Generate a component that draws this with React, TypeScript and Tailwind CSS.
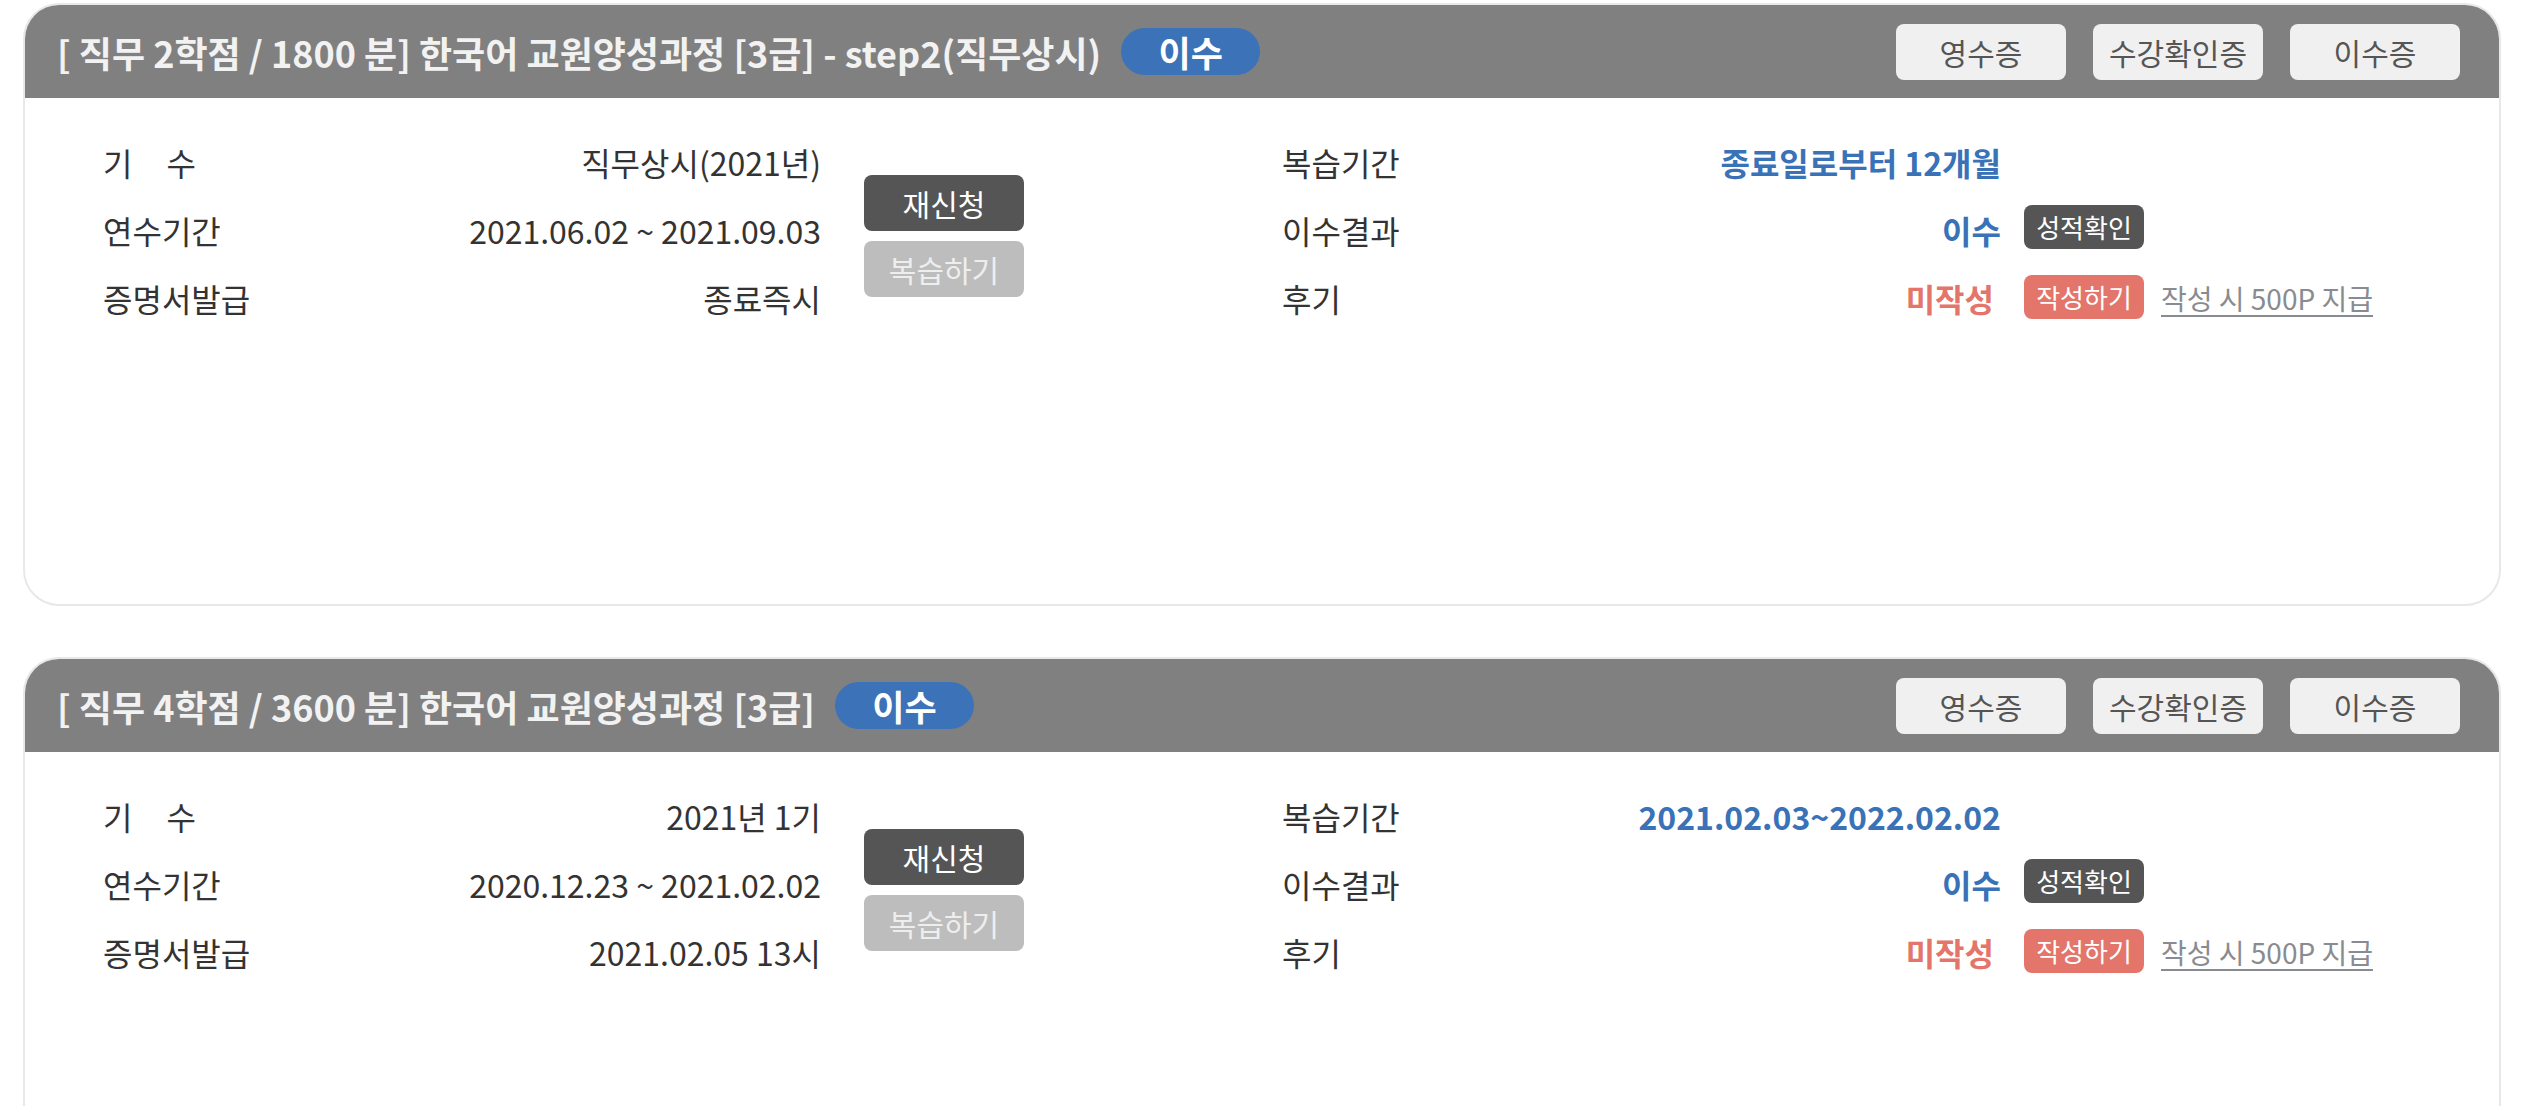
import React from "react";

type Course = {
  title: string;
  gisu: string;
  period: string;
  cert: string;
  review: string;
};

const courses: Course[] = [
  {
    title: "[ 직무 2학점 / 1800 분] 한국어 교원양성과정 [3급] - step2(직무상시)",
    gisu: "직무상시(2021년)",
    period: "2021.06.02 ~ 2021.09.03",
    cert: "종료즉시",
    review: "종료일로부터 12개월",
  },
  {
    title: "[ 직무 4학점 / 3600 분] 한국어 교원양성과정 [3급]",
    gisu: "2021년 1기",
    period: "2020.12.23 ~ 2021.02.02",
    cert: "2021.02.05 13시",
    review: "2021.02.03~2022.02.02",
  },
];

function Card({ c, first }: { c: Course; first: boolean }) {
  return (
    <div
      className={`w-[2478px] h-[603px] border-2 border-[#e8e8e8] rounded-[36px] overflow-hidden bg-white ${
        first ? "" : "mt-[51px]"
      }`}
    >
      <div className="h-[93px] bg-[#808080] flex items-center justify-between pl-[32px] pr-[39px]">
        <div className="flex items-center">
          <span className="text-[36px] font-bold text-[#f2f2f2] leading-none whitespace-nowrap">
            {c.title}
          </span>
          <span className="ml-[20px] h-[47px] w-[139px] rounded-full bg-[#3b72b8] text-white font-bold text-[35px] flex items-center justify-center leading-none">
            이수
          </span>
        </div>
        <div className="flex items-center gap-[27px]">
          {["영수증", "수강확인증", "이수증"].map((t) => (
            <div
              key={t}
              className="w-[170px] h-[56px] rounded-[8px] bg-[#f0f0f0] text-[#555555] text-[30px] flex items-center justify-center leading-none"
            >
              {t}
            </div>
          ))}
        </div>
      </div>
      <div className="flex pt-[30px] pl-[78px] text-[32px] text-[#333333]">
        <div className="w-[718px] flex flex-col">
          <div className="h-[68px] flex items-center justify-between">
            <span className="flex">
              <span>기</span>
              <span className="ml-[34px]">수</span>
            </span>
            <span>{c.gisu}</span>
          </div>
          <div className="h-[68px] flex items-center justify-between">
            <span>연수기간</span>
            <span>{c.period}</span>
          </div>
          <div className="h-[68px] flex items-center justify-between">
            <span>증명서발급</span>
            <span>{c.cert}</span>
          </div>
        </div>
        <div className="ml-[43px] mt-[47px] w-[160px] flex flex-col gap-[10px]">
          <div className="h-[56px] rounded-[8px] bg-[#555555] text-white text-[30px] flex items-center justify-center leading-none">
            재신청
          </div>
          <div className="h-[56px] rounded-[8px] bg-[#bdbdbd] text-[#eeeeee] text-[30px] flex items-center justify-center leading-none">
            복습하기
          </div>
        </div>
        <div className="ml-[258px] flex flex-col">
          <div className="h-[68px] flex items-center">
            <div className="w-[719px] flex items-center justify-between">
              <span>복습기간</span>
              <span className="font-bold text-[#3a72b8]">{c.review}</span>
            </div>
          </div>
          <div className="h-[68px] flex items-center">
            <div className="w-[719px] flex items-center justify-between">
              <span>이수결과</span>
              <span className="font-bold text-[#3a72b8]">이수</span>
            </div>
            <div className="ml-[23px] w-[120px] h-[44px] rounded-[8px] bg-[#555555] text-white text-[26px] flex items-center justify-center leading-none mt-[-6px]">
              성적확인
            </div>
          </div>
          <div className="h-[68px] flex items-center">
            <div className="w-[719px] flex items-center justify-between">
              <span>후기</span>
              <span className="font-bold text-[#e3756a] pr-[7px]">미작성</span>
            </div>
            <div className="ml-[23px] w-[120px] h-[44px] rounded-[8px] bg-[#e3756a] text-white text-[26px] flex items-center justify-center leading-none mt-[-2px]">
              작성하기
            </div>
            <span className="ml-[17px] text-[28px] text-[#888c92] underline underline-offset-[5px]">
              작성 시 500P 지급
            </span>
          </div>
        </div>
      </div>
    </div>
  );
}

export default function App() {
  return (
    <div className="min-h-screen bg-white pt-[3px] pl-[23px] font-['Noto_Sans_CJK_KR','Noto_Sans',sans-serif]">
      {courses.map((c, i) => (
        <Card key={i} c={c} first={i === 0} />
      ))}
    </div>
  );
}
